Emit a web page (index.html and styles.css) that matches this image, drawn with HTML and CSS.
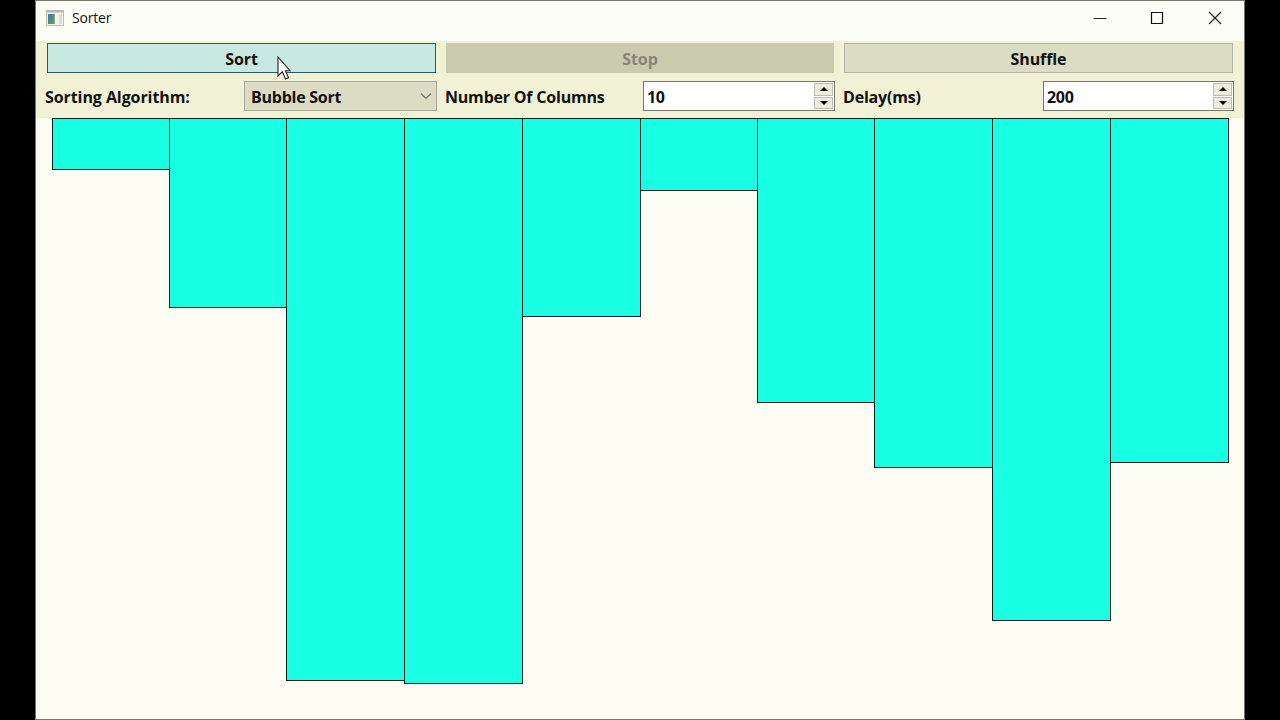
FILE: index.html
```
<!DOCTYPE html>
<html lang="en">
<head>
<meta charset="utf-8">
<title>Sorter</title>
<link rel="stylesheet" href="styles.css">
</head>
<body>
<main class="window">
  <header class="titlebar">
    <svg class="app-icon" width="18" height="16" viewBox="0 0 18 16"><rect x=".5" y=".5" width="17" height="15" fill="#f3f3e8" stroke="#bdbdb4"/><path d="M1 1.5h16" stroke="#b5b5b0" stroke-width="2"/><defs><linearGradient id="g" x2="1" y2="1"><stop stop-color="#4778a0"/><stop offset="1" stop-color="#55a565"/></linearGradient></defs><rect x="2" y="4" width="6" height="10" fill="url(#g)"/><path d="M8.5 4v10" stroke="#9aa39a"/><rect x="13" y="4" width="3" height="10" fill="#ddddd5"/></svg>
    <h1 class="title">Sorter</h1>
    <svg class="win-btn" width="14" height="14" viewBox="0 0 14 14"><path d="M.5 7.5h13" stroke="#222"/></svg>
    <svg class="win-btn" width="14" height="14" viewBox="0 0 14 14"><path d="M1.5 1.5h11v11h-11z" fill="none" stroke="#111" stroke-width="1.2"/></svg>
    <svg class="win-btn" width="14" height="14" viewBox="0 0 14 14"><path d="M1 1l12 12M13 1L1 13" stroke="#222" stroke-width="1.2"/></svg>
  </header>
  <section class="buttons">
    <button class="btn hot">Sort</button>
    <button class="btn off" disabled>Stop</button>
    <button class="btn">Shuffle</button>
  </section>
  <section class="options">
    <span class="label">Sorting Algorithm:</span>
    <div class="combo"><span>Bubble Sort</span><svg width="12" height="8" viewBox="0 0 12 8"><path d="M1 1.5l5 5 5-5" fill="none" stroke="#777" stroke-width="1.2"/></svg></div>
    <span class="label">Number Of Columns</span>
    <div class="spin"><span>10</span><div class="steps"><i><svg width="8" height="4" viewBox="0 0 8 4"><path d="M0 4l4-4 4 4z"/></svg></i><i><svg width="8" height="4" viewBox="0 0 8 4"><path d="M0 0l4 4 4-4z"/></svg></i></div></div>
    <span class="label">Delay(ms)</span>
    <div class="spin"><span>200</span><div class="steps"><i><svg width="8" height="4" viewBox="0 0 8 4"><path d="M0 4l4-4 4 4z"/></svg></i><i><svg width="8" height="4" viewBox="0 0 8 4"><path d="M0 0l4 4 4-4z"/></svg></i></div></div>
  </section>
  <section class="chart">
    <div class="bar" style="height:52px"></div>
    <div class="bar" style="height:190px"></div>
    <div class="bar" style="height:563px"></div>
    <div class="bar" style="height:566px"></div>
    <div class="bar" style="height:199px"></div>
    <div class="bar" style="height:73px"></div>
    <div class="bar" style="height:285px"></div>
    <div class="bar" style="height:350px"></div>
    <div class="bar" style="height:503px"></div>
    <div class="bar" style="height:345px"></div>
  </section>
</main>
<svg class="cursor" width="14" height="25" viewBox="0 0 14 25"><path d="M1 1v19l4.4-4.2 3.1 7.2 3-1.3-3.1-7H13z" fill="#fff" stroke="#222" stroke-width="1.1"/></svg>
</body>
</html>
```
FILE: styles.css
```
* { box-sizing: border-box; }
body {
  margin: 0;
  width: 1280px;
  height: 720px;
  padding: 0 35px;
  background: #000;
  overflow: hidden;
  font: 700 16px/20px "Open Sans", "Noto Sans", sans-serif;
  letter-spacing: -.08px;
  color: #111;
}
.window {
  width: 1210px;
  height: 720px;
  border: 1px solid #77776a;
  background: #fdfdf3;
  display: flex;
  flex-direction: column;
}
.titlebar {
  height: 40px;
  flex: none;
  display: flex;
  align-items: center;
  padding: 0 22px 6px 10px;
  background: #fdfdf8;
}
.title {
  margin: 0 auto 0 8px;
  font: 400 14px/20px "Open Sans", "Noto Sans", sans-serif;
  letter-spacing: -.2px;
}
.win-btn { margin-left: 43px; }
.win-btn:last-child { margin-left: 44px; }
.buttons {
  height: 37px;
  flex: none;
  display: grid;
  grid-template-columns: 389px 388px 389px;
  column-gap: 10px;
  padding: 2px 11px 5px;
  background: #f1f1d6;
}
.btn {
  font: inherit;
  letter-spacing: inherit;
  color: inherit;
  padding: 2px 0 0;
  border: 1px solid #b4b4a8;
  background: #dcdcc4;
}
.hot { background: #c8e8e2; border-color: #235a70; }
.off { background: #cacaae; border-color: #cacaae; color: #85857b; }
.options {
  height: 40px;
  flex: none;
  display: grid;
  grid-template-columns: 199px 193px 8px 198px 192px 8px 200px 191px;
  align-items: start;
  padding: 3px 0 0 9px;
  background: #f1f1d6;
}
.label { line-height: 32px; white-space: nowrap; }
.label:nth-of-type(2) { grid-column: 4; letter-spacing: -.2px; }
.label:nth-of-type(3) { grid-column: 7; letter-spacing: -.2px; }
.combo, .spin {
  height: 30px;
  display: flex;
  align-items: center;
  border: 1px solid #aaa99c;
  background: #dcdcc4;
}
.combo span, .spin span { padding-top: 1px; }
.combo { justify-content: space-between; padding: 0 4px 0 6px; letter-spacing: -.25px; }
.spin { justify-content: space-between; padding: 0 1px 0 3px; background: #fefefe; border-color: #77776c; letter-spacing: -.3px; }
.steps {
  width: 19px;
  height: 26px;
  display: grid;
  gap: 1px;
  grid-template-rows: 1fr 1fr;
}
.steps i { border: 1px solid #bdbdaf; background: #ececdc; display: grid; place-items: center; }
.chart {
  display: grid;
  grid-template-columns: 117px 117px 118px 118px 118px 117px 117px 118px 118px 118px;
  align-items: start;
  padding-left: 16px;
}
.bar {
  margin-right: -1px;
  border: 1px solid #06231f;
  background: #18ffe4;
}
.cursor { position: absolute; left: 277px; top: 56px; }
```
